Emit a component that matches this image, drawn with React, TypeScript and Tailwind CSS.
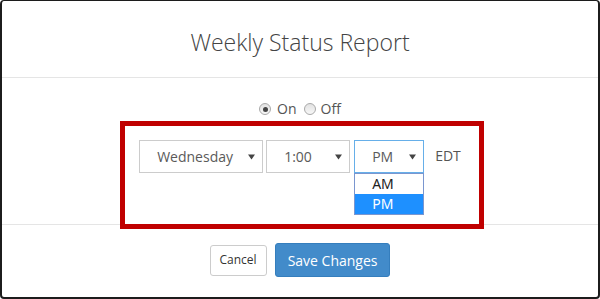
import React from "react";

const font = { fontFamily: '"Open Sans", "Liberation Sans", sans-serif' };

const Caret = () => (
  <svg width="7" height="6" viewBox="0 0 7 6" className="absolute right-[7px] top-1/2 -translate-y-1/2">
    <path d="M0 0.5 L7 0.5 L3.5 5.5 Z" fill="#444" />
  </svg>
);

const Radio = ({ checked }: { checked?: boolean }) => (
  <span className="relative inline-flex h-[12px] w-[12px] items-center justify-center rounded-full border border-[#a9a9a9] bg-gradient-to-b from-[#e2e2e2] to-[#f7f7f7]">
    {checked && <span className="h-[5px] w-[5px] rounded-full bg-[#444]" />}
  </span>
);

const FakeSelect = ({
  value,
  width,
  focused,
}: {
  value: string;
  width: string;
  focused?: boolean;
}) => (
  <div
    className={`relative flex h-[33px] items-center bg-white pl-[17px] text-[14px] text-[#5a5a5a] ${width} ${
      focused ? "border border-[#66afe9]" : "border border-[#cccccc]"
    }`}
  >
    {value}
    <Caret />
  </div>
);

export default function App() {
  return (
    <div className="h-[299px] w-[600px] bg-white" style={font}>
      <div className="relative flex h-full w-full flex-col rounded-[4px] border-t border-b-2 border-x-2 border-[#1c1c1c] bg-white">
        {/* header */}
        <div className="h-[77px] border-b border-[#e5e5e5] pt-[29px] text-center text-[23px] leading-[1.1] font-light text-[#444]">
          Weekly Status Report
        </div>

        {/* body */}
        <div className="flex h-[146px] flex-col items-center">
          <div className="mt-[22px] flex items-center text-[14px] leading-[18px] text-[#555]">
            <Radio checked />
            <span className="ml-[6px] mr-[7px]">On</span>
            <Radio />
            <span className="ml-[5px]">Off</span>
          </div>

          <div className="mt-[22px] flex items-center">
            <FakeSelect value="Wednesday" width="w-[124px]" />
            <div className="ml-[3px]">
              <FakeSelect value="1:00" width="w-[84px]" />
            </div>
            <div className="relative ml-[4px]">
              <FakeSelect value="PM" width="w-[70px]" focused />
              <ul
                className="absolute left-0 top-full w-[70px] border border-[#7a96cf] bg-white text-[14px] leading-[20px]"
                style={{ fontFamily: '"Noto Sans", "Open Sans", sans-serif' }}
              >
                <li className="pl-[17px] text-[#222]">AM</li>
                <li className="bg-[#1e90ff] pl-[17px] text-white">PM</li>
              </ul>
            </div>
            <span className="ml-[11px] mb-[3px] text-[14px] text-[#555]">EDT</span>
          </div>
        </div>

        {/* footer */}
        <div className="flex flex-1 items-center justify-center gap-[8px] border-t border-[#e5e5e5] pb-[2px]">
          <button className="h-[31px] rounded-[3px] border border-[#cccccc] bg-white px-[9px] text-[12px] text-[#333]">
            Cancel
          </button>
          <button className="h-[34px] rounded-[3px] border border-[#357ebd] bg-[#428bca] px-[12px] text-[14px] text-white">
            Save Changes
          </button>
        </div>

        {/* annotation highlight */}
        <div className="pointer-events-none absolute left-[118px] top-[120px] h-[108px] w-[364px] border-[5px] border-[#c00000]" />
      </div>
    </div>
  );
}
